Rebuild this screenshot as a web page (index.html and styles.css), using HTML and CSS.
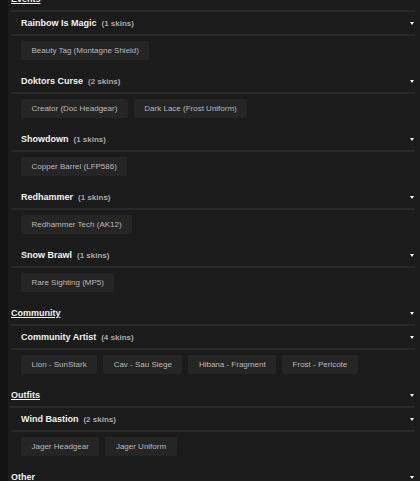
FILE: index.html
```html
<!DOCTYPE html>
<html>
<head>
<meta charset="utf-8">
<link rel="stylesheet" href="styles.css">
</head>
<body>
<div class="page">
  <div class="section">
    <div class="section-head"><span class="section-title">Events</span></div>
    <div class="sub">
      <div class="sub-head"><span class="sub-title">Rainbow Is Magic</span><span class="count">(1 skins)</span><span class="arrow"></span></div>
      <div class="chips"><span class="chip">Beauty Tag (Montagne Shield)</span></div>
    </div>
    <div class="sub">
      <div class="sub-head"><span class="sub-title">Doktors Curse</span><span class="count">(2 skins)</span><span class="arrow"></span></div>
      <div class="chips"><span class="chip">Creator (Doc Headgear)</span><span class="chip">Dark Lace (Frost Uniform)</span></div>
    </div>
    <div class="sub">
      <div class="sub-head"><span class="sub-title">Showdown</span><span class="count">(1 skins)</span><span class="arrow"></span></div>
      <div class="chips"><span class="chip">Copper Barrel (LFP586)</span></div>
    </div>
    <div class="sub">
      <div class="sub-head"><span class="sub-title">Redhammer</span><span class="count">(1 skins)</span><span class="arrow"></span></div>
      <div class="chips"><span class="chip">Redhammer Tech (AK12)</span></div>
    </div>
    <div class="sub">
      <div class="sub-head"><span class="sub-title">Snow Brawl</span><span class="count">(1 skins)</span><span class="arrow"></span></div>
      <div class="chips"><span class="chip">Rare Sighting (MP5)</span></div>
    </div>
  </div>
  <div class="section">
    <div class="section-head"><span class="section-title">Community</span><span class="arrow"></span></div>
    <div class="sub">
      <div class="sub-head"><span class="sub-title">Community Artist</span><span class="count">(4 skins)</span><span class="arrow"></span></div>
      <div class="chips"><span class="chip">Lion - SunStark</span><span class="chip">Cav - Sau Siege</span><span class="chip">Hibana - Fragment</span><span class="chip">Frost - Pericote</span></div>
    </div>
  </div>
  <div class="section">
    <div class="section-head"><span class="section-title">Outfits</span><span class="arrow"></span></div>
    <div class="sub">
      <div class="sub-head"><span class="sub-title">Wind Bastion</span><span class="count">(2 skins)</span><span class="arrow"></span></div>
      <div class="chips"><span class="chip">Jager Headgear</span><span class="chip">Jager Uniform</span></div>
    </div>
  </div>
  <div class="section">
    <div class="section-head"><span class="section-title">Other</span><span class="arrow"></span></div>
  </div>
</div>
</body>
</html>
```
FILE: styles.css
```css
html, body {
  margin: 0;
  padding: 0;
  background: #131313;
  height: 100%;
  overflow: hidden;
}
body {
  font-family: "Liberation Sans", Arial, sans-serif;
  padding-left: 8px;
}
.page {
  background: #1b1b1b;
  min-height: 100%;
  margin-top: -12px;
  padding: 0 5px 0 2px;
}
.section-head, .sub-head {
  display: flex;
  align-items: center;
  height: 22px;
  border-bottom: 2px solid #282828;
}
.section-title {
  color: #f2f2f2;
  font-size: 9px;
  font-weight: bold;
  text-decoration: underline;
  padding-left: 1px;
}
.sub {
  padding-left: 1px;
}
.sub-head {
  padding-left: 10px;
}
.sub-title {
  color: #f2f2f2;
  font-size: 9px;
  font-weight: bold;
}
.count {
  color: #a9a9a9;
  font-size: 8px;
  font-weight: bold;
  margin-left: 5px;
}
.arrow {
  margin-left: auto;
  margin-right: 1px;
  width: 0;
  height: 0;
  border-left: 2.5px solid transparent;
  border-right: 2.5px solid transparent;
  border-top: 3.5px solid #f0f0f0;
}
.chips {
  display: flex;
  gap: 6px;
  padding: 5px 0 10px 10px;
}
.chip {
  background: #252525;
  color: #b9b9b9;
  font-size: 8px;
  height: 19px;
  line-height: 19px;
  padding: 0 10.5px;
  border-radius: 2px;
  white-space: nowrap;
}
```
